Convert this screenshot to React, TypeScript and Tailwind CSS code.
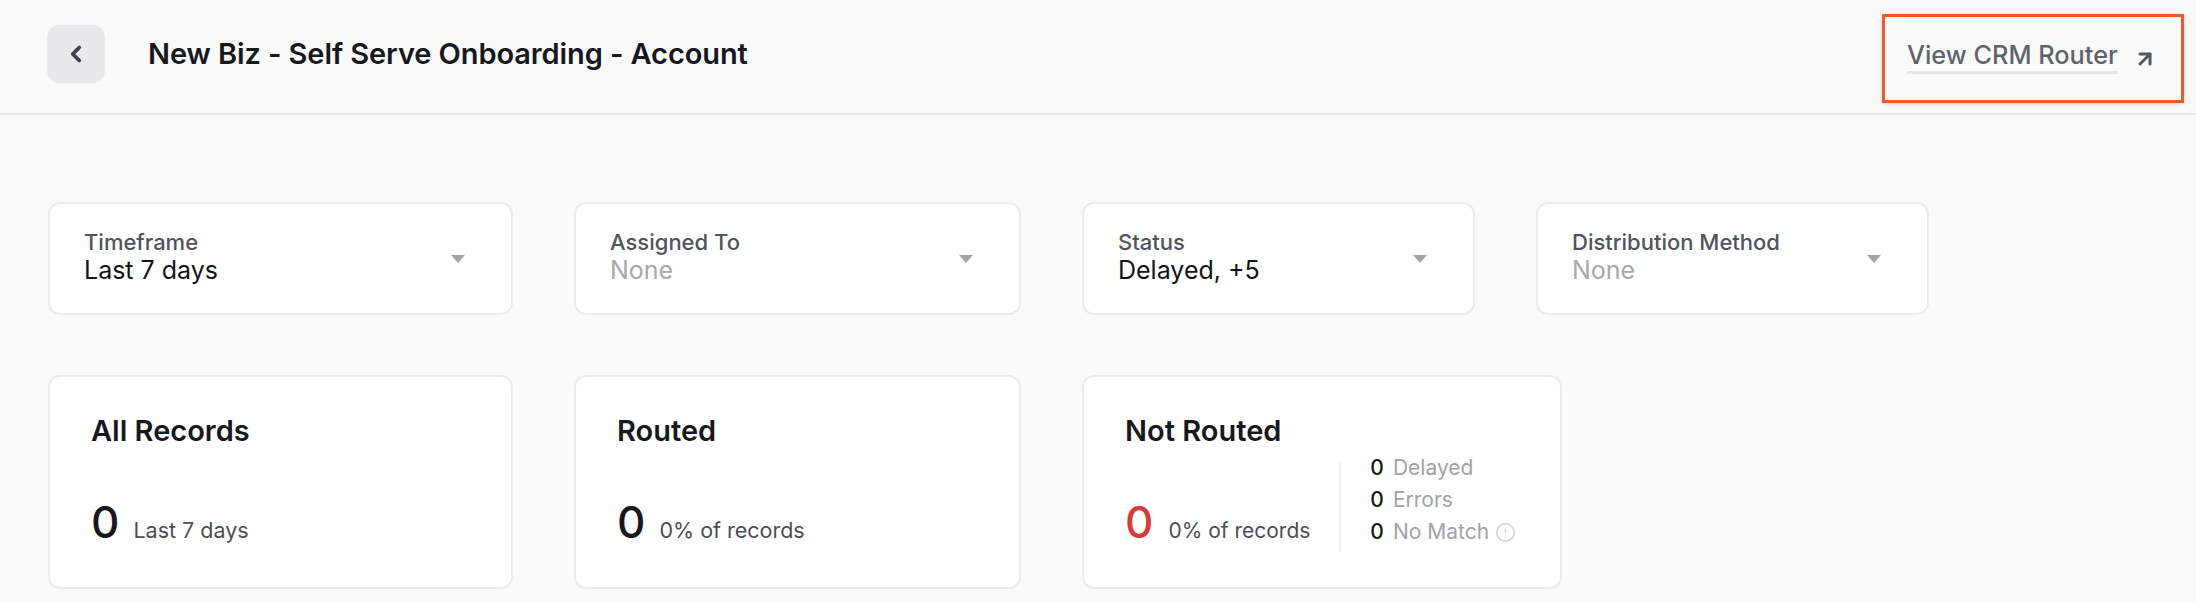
import { ChevronLeft, ArrowUpRight, CircleAlert } from 'lucide-react';

interface Filter {
  label: string;
  value: string;
  empty?: boolean;
  width: string;
}

const filters: Filter[] = [
  { label: 'Timeframe', value: 'Last 7 days', width: 'w-[465px]' },
  { label: 'Assigned To', value: 'None', empty: true, width: 'w-[447px]' },
  { label: 'Status', value: 'Delayed, +5', width: 'w-[393px]' },
  { label: 'Distribution Method', value: 'None', empty: true, width: 'w-[393px]' },
];

function Caret() {
  return (
    <svg width="14" height="8" viewBox="0 0 14 8" className="shrink-0">
      <polygon points="0,0 14,0 7,8" fill="#a3a3a3" />
    </svg>
  );
}

function FilterCard({ f }: { f: Filter }) {
  return (
    <div
      className={`${f.width} h-[113px] bg-white border-2 border-[#ececec] rounded-[12px] flex items-center justify-between pl-[34px] pr-[46px]`}
    >
      <div className="flex flex-col mt-[-4px]">
        <span className="text-[22px] leading-[26px] font-medium text-[#50545c]">{f.label}</span>
        <span
          className={`text-[25px] leading-[30px] ${f.empty ? 'text-[#a8a8ad]' : 'text-[#121417]'}`}
        >
          {f.value}
        </span>
      </div>
      <Caret />
    </div>
  );
}

function StatCard({
  title,
  sub,
  width,
  children,
}: {
  title: string;
  sub: string;
  width: string;
  children?: React.ReactNode;
}) {
  return (
    <div
      className={`${width} h-[214px] bg-white border-2 border-[#ececec] rounded-[12px] flex flex-col justify-between pt-[37px] pb-[41px] px-[41px]`}
    >
      <h2 className="text-[29px] leading-[34px] font-semibold text-[#16181c]">{title}</h2>
      {children ?? (
        <div className="flex items-baseline gap-[14px] whitespace-nowrap">
          <span className="text-[44px] leading-[44px] font-medium text-[#16181c]">0</span>
          <span className="text-[21.5px] text-[#4a4f57]">{sub}</span>
        </div>
      )}
    </div>
  );
}

export default function App() {
  return (
    <div className="min-h-screen w-full bg-[#fafafa] font-['Inter',sans-serif]">
      <header className="h-[115px] border-b-2 border-[#e6e6e9] flex items-start justify-between pl-[47px] pr-[12px]">
        <div className="flex items-center gap-[43px] mt-[25px]">
          <button className="w-[58px] h-[58px] rounded-[12px] bg-[#e9e9eb] flex items-center justify-center text-[#3d424a]">
            <ChevronLeft size={26} strokeWidth={3.5} />
          </button>
          <h1 className="text-[29px] font-semibold text-[#16181c] tracking-[-0.1px]">
            New Biz - Self Serve Onboarding - Account
          </h1>
        </div>
        <div className="mt-[14px] w-[302px] h-[89px] border-[3px] border-[#ee5a2e] shadow-[0_1px_4px_rgba(0,0,0,0.18)] flex items-start pl-[22px] pr-[24px] pt-[22px] justify-between">
          <span className="text-[25.3px] leading-[32px] font-medium text-[#5f636b] border-b-[3px] border-[#e6e6ea]">
            View CRM Router
          </span>
          <ArrowUpRight size={24} strokeWidth={3} className="text-[#555a61] mt-[8px]" />
        </div>
      </header>

      <main className="px-[48px] pt-[87px] flex flex-col gap-[60px]">
        <div className="flex gap-[61px]">
          {filters.map((f) => (
            <FilterCard key={f.label} f={f} />
          ))}
        </div>

        <div className="flex gap-[61px]">
          <StatCard title="All Records" sub="Last 7 days" width="w-[465px]" />
          <StatCard title="Routed" sub="0% of records" width="w-[447px]" />
          <StatCard title="Not Routed" sub="" width="w-[480px]">
            <div className="flex items-end whitespace-nowrap">
              <div className="flex items-baseline gap-[15px] shrink-0">
                <span className="text-[44px] leading-[44px] font-medium text-[#d63d3a]">0</span>
                <span className="text-[21px] text-[#4a4f57]">0% of records</span>
              </div>
              <div className="w-[2px] h-[90px] bg-[#efefef] mx-[29px] mb-[-6px] shrink-0" />
              <div className="flex flex-col text-[21px] leading-[32px] mb-[-2px] shrink-0">
                {['Delayed', 'Errors', 'No Match'].map((l) => (
                  <div key={l} className="flex items-center gap-[9px]">
                    <span className="font-medium text-[#16181c]">0</span>
                    <span className="text-[#a0a3a9]">{l}</span>
                    {l === 'No Match' && (
                      <CircleAlert size={21} strokeWidth={2} className="text-[#d4d6da] ml-[-3px]" />
                    )}
                  </div>
                ))}
              </div>
            </div>
          </StatCard>
        </div>
      </main>
    </div>
  );
}
